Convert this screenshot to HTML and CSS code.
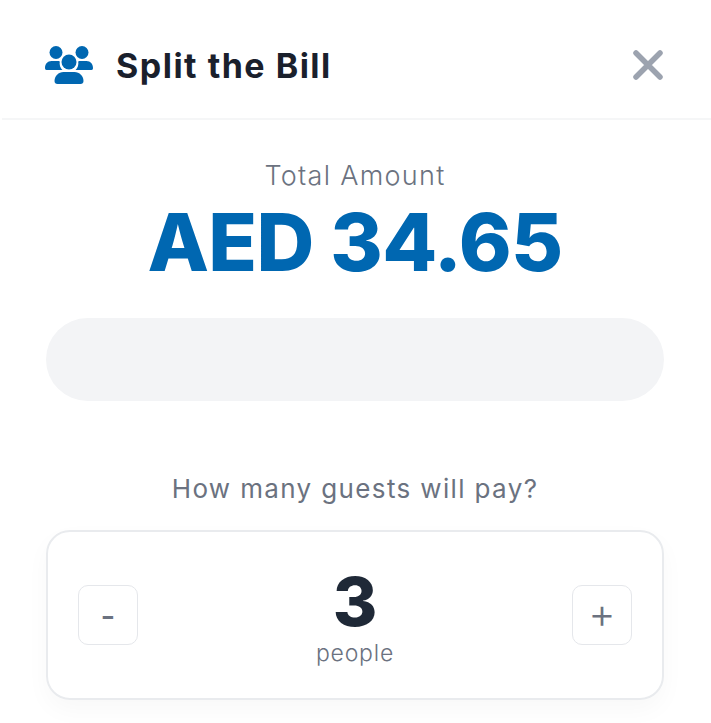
FILE: index.html
```html
<!DOCTYPE html>
<html>
<head>
<meta charset="utf-8" />
<title>Split the Bill</title>
<link rel="stylesheet" href="styles.css">
</head>

<body>
  <div class="header">
    <div class="headertitle">
      <svg class="usersicon" viewBox="0 0 48 38" width="48" height="38">
        <circle cx="11" cy="6.500" r="6.500" />
        <circle cx="37" cy="6.500" r="6.500" />
        <circle cx="24" cy="16" r="7.500" />
        <path d="M0 22C0 18 2.500 15 6.500 15h6c.9 0 1.600.1 2.300.4-.6 3 .5 6.600 2.600 8.600H1.500C.5 24 0 23.200 0 22zM48 22c0-4-2.500-7-6.500-7h-6c-.9 0-1.600.1-2.300.4.6 3-.5 6.600-2.600 8.600h15.900c1 0 1.500-.8 1.500-2z" />
        <path d="M9.500 35C9.500 30 13.500 26 18.500 26h11c5 0 9 4 9 9 0 1.800-1.200 3-3 3h-23c-1.800 0-3-1.200-3-3z" />
      </svg>
      <span class="titletext">Split the Bill</span>
    </div>
    <svg class="closeicon" viewBox="0 0 30 30" width="30" height="30">
      <path d="M3 3L27 27M27 3L3 27" />
    </svg>
  </div>

  <div class="content">
    <div class="totallabel">Total Amount</div>
    <div class="totalvalue">AED 34.65</div>
    <div class="pill"></div>
    <div class="question">How many guests will pay?</div>
    <div class="stepper">
      <div class="stepbutton stepminus">-</div>
      <div class="count">
        <div class="countvalue">3</div>
        <div class="countlabel">people</div>
      </div>
      <div class="stepbutton stepplus">+</div>
    </div>
  </div>
</body>
</html>
```

FILE: styles.css
```css
html, body {
  margin: 0;
  height: 723px;
  overflow: hidden;
  background: #fff;
}

body {
  font-family: Inter, "Open Sans", sans-serif;
  color: #1f2937;
}

.header {
  display: flex;
  align-items: center;
  justify-content: space-between;
  box-sizing: border-box;
  height: 120px;
  margin-left: 2px;
  padding: 12px 48px 0 43px;
  border-bottom: 2px solid #f5f6f7;
}

.headertitle {
  display: flex;
  align-items: center;
  gap: 23px;
}

.usersicon { fill: #0067b1; display: block; }

.titletext {
  font-size: 34px;
  font-weight: 700;
  letter-spacing: 1.500px;
  color: #1a202c;
}

.closeicon {
  display: block;
  fill: none;
  stroke: #9ca3af;
  stroke-width: 5.500;
  stroke-linecap: round;
}

.content {
  padding: 0 47px 0 46px;
  text-align: center;
}

.totallabel {
  margin-top: 38px;
  font-size: 27px;
  line-height: 36px;
  font-weight: 300;
  letter-spacing: 1.300px;
  color: #6b7280;
}

.totalvalue {
  margin-top: 2px;
  font-size: 80px;
  line-height: 92px;
  font-weight: 800;
  letter-spacing: -0.700px;
  color: #0067b1;
}

.pill {
  height: 83px;
  margin-top: 30px;
  border-radius: 42px;
  background: #f3f4f6;
}

.question {
  margin-top: 70px;
  font-size: 26px;
  line-height: 36px;
  letter-spacing: 1.360px;
  color: #6b7280;
}

.stepper {
  display: flex;
  align-items: center;
  justify-content: space-between;
  box-sizing: border-box;
  height: 170px;
  margin-top: 23px;
  padding: 0 30px;
  border: 2px solid #e9ebee;
  border-radius: 24px;
  box-shadow: 0 10px 24px rgba(0, 0, 0, 0.03);
}

.stepbutton {
  display: flex;
  align-items: center;
  justify-content: center;
  box-sizing: border-box;
  width: 60px;
  height: 60px;
  border: 1px solid #e5e7eb;
  border-radius: 10px;
  color: #6b7280;
}

.stepminus { font-size: 32px; font-weight: 500; }

.stepplus { padding-bottom: 5px; font-size: 42px; font-weight: 300; }

.count { padding-top: 4px; }

.countvalue {
  font-size: 68px;
  line-height: 70px;
  font-weight: 800;
  color: #1f2937;
}

.countlabel {
  margin-top: 2px;
  font-size: 23px;
  line-height: 30px;
  font-weight: 300;
  letter-spacing: 0.800px;
  color: #6b7280;
}
```
